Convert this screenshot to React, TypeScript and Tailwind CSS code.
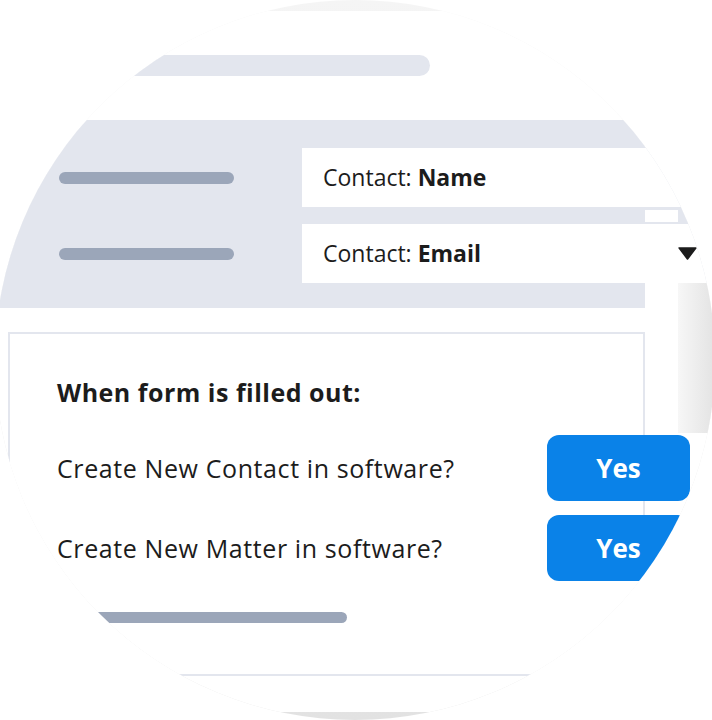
// Contact form mapping illustration, cropped into a circle
const font = { fontFamily: '"Open Sans", "Noto Sans", sans-serif' }

function Pill({ w, className = '' }: { w: string; className?: string }) {
  return <div className={`h-[12px] rounded-full bg-[#9ba6b9] ${w} ${className}`} />
}

function FieldRow({ label, value, arrow }: { label: string; value: string; arrow?: boolean }) {
  return (
    <div className="flex h-[59px] items-center">
      <Pill w="w-[175px]" className="ml-[64px] shrink-0" />
      <div className="ml-[68px] flex h-[59px] w-[420px] shrink-0 items-center bg-white pl-[21px] pr-[25px] text-[23px] leading-[59px] text-[#1c1c1c]">
        <span>
          {label} <b className="font-bold">{value}</b>
        </span>
        {arrow && (
          <svg className="ml-auto" width="19" height="13" viewBox="0 0 19 13">
            <path d="M1.2 1 H17.8 L9.5 12 Z" fill="#1c1c1c" stroke="#1c1c1c" strokeWidth="1.6" strokeLinejoin="round" />
          </svg>
        )}
      </div>
    </div>
  )
}

function Question({ text, className = '' }: { text: string; className?: string }) {
  return (
    <div className={`flex h-[66px] items-center ${className}`}>
      <span className="text-[25px] leading-[34px] tracking-[0.6px] text-[#1c1c1c]">{text}</span>
      <div className="ml-auto mr-[-47px] flex h-[66px] w-[143px] shrink-0 items-center justify-center rounded-[12px] bg-[#0a82e8] text-[26px] font-bold text-white">
        Yes
      </div>
    </div>
  )
}

export default function App() {
  return (
    <div className="relative h-[720px] w-[712px] overflow-hidden bg-white" style={font}>
      {/* 뒤쪽 회색 원 — 위/아래/오른쪽에 살짝 보임 */}
      <div className="absolute left-[-5px] top-0 h-[720px] w-[720px] rounded-full bg-gradient-to-b from-[#f5f5f5] to-[#e2e2e2]" />

      {/* 원형 마스크 */}
      <div className="absolute left-[-5px] top-0 h-[720px] w-[720px] overflow-hidden rounded-full pt-[11px]">
        <div className="h-[701px] bg-white pt-[44px]">
          {/* 상단 바 */}
          <div className="h-[21px] w-[435px] rounded-r-full bg-[#e3e6ee]" />

          {/* 필드 매핑 밴드 */}
          <div className="mt-[44px] bg-[#e3e6ee] pt-[28px]">
            <FieldRow label="Contact:" value="Name" />
            <div className="h-[17px] pt-[3px]">
              <div className="ml-[650px] h-[12px] w-[33px] bg-white" />
            </div>
            <FieldRow label="Contact:" value="Email" arrow />
          </div>

          <div className="flex">
            <div className="w-[683px] shrink-0">
              <div className="flex h-[25px]">
                <div className="w-[650px] bg-[#e3e6ee]" />
              </div>
              <div className="h-[24px]" />

              {/* 폼 패널 */}
              <div className="ml-[13px] h-[344px] w-[637px] border-2 border-[#e3e6ee] bg-white pl-[47px] pt-[41px]">
                <p className="text-[25px] font-bold leading-[34px] tracking-[0.5px] text-[#1c1c1c]">When form is filled out:</p>
                <Question text="Create New Contact in software?" className="mt-[26px]" />
                <Question text="Create New Matter in software?" className="mt-[14px]" />
                <div className="ml-[-47px] mt-[31px] h-[11px] w-[337px] rounded-r-full bg-[#9ba6b9]" />
              </div>
            </div>
            <div className="flex-1">
              <div className="h-[150px] bg-gradient-to-r from-[#f7f7f7] to-[#e3e3e3]" />
            </div>
          </div>
        </div>
      </div>
    </div>
  )
}
